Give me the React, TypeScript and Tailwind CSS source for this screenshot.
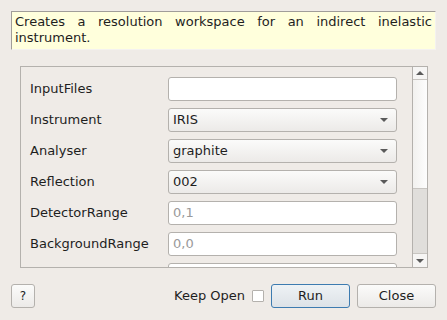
const font = { fontFamily: '"DejaVu Sans", sans-serif' };

function TextRow({ label, value }: { label: string; value?: string }) {
  return (
    <div className="flex items-center h-[24px]">
      <div className="w-[138px] text-[13px] text-[#1e1e1e]">{label}</div>
      <div className="w-[229px] h-[24px] bg-white border border-[#b4b1ad] rounded-[3px] flex items-center px-[4px] text-[13px] text-[#9a9a9a]">
        {value}
      </div>
    </div>
  );
}

function ComboRow({ label, value }: { label: string; value: string }) {
  return (
    <div className="flex items-center h-[24px]">
      <div className="w-[138px] text-[13px] text-[#1e1e1e]">{label}</div>
      <div className="w-[229px] h-[24px] border border-[#b4b1ad] rounded-[3px] flex items-center justify-between pl-[4px] pr-[8px] text-[13px] text-[#1e1e1e] bg-gradient-to-b from-[#fbfbfa] to-[#eceae8]">
        <span>{value}</span>
        <svg width="8" height="4" viewBox="0 0 8 4">
          <path d="M0 0 H8 L4 4 Z" fill="#5a5a5a" />
        </svg>
      </div>
    </div>
  );
}

export default function App() {
  return (
    <div
      className="w-[447px] h-[320px] bg-[#efebe7] flex flex-col px-[11px] pt-[11px] overflow-hidden"
      style={font}
    >
      {/* description */}
      <div className="h-[39px] bg-[#ffffdc] border-t border-l border-[#a09d99] border-r border-r-[#f4f2f0] border-b border-b-[#f4f2f0] px-[3px] pt-[2px] text-[13px] leading-[16px] text-[#1e1e1e] text-justify">
        Creates a resolution workspace for an indirect inelastic instrument.
      </div>

      {/* properties scroll area */}
      <div className="mt-[16px] ml-[9px] mr-[8px] h-[202px] border border-[#b4b1ad] flex overflow-hidden">
        <div className="flex-1 pl-[9px] pt-[10px] flex flex-col gap-[7px]">
          <TextRow label="InputFiles" />
          <ComboRow label="Instrument" value="IRIS" />
          <ComboRow label="Analyser" value="graphite" />
          <ComboRow label="Reflection" value="002" />
          <TextRow label="DetectorRange" value="0,1" />
          <TextRow label="BackgroundRange" value="0,0" />
          <TextRow label="" />
        </div>
        <div className="w-[15px] border-l border-[#b4b1ad] flex flex-col">
          <div className="h-[13px] border-b border-[#c8c5c1] bg-[#f6f5f4] flex items-center justify-center">
            <svg width="8" height="4" viewBox="0 0 8 4">
              <path d="M0 4 H8 L4 0 Z" fill="#5a5a5a" />
            </svg>
          </div>
          <div className="h-[109px] bg-gradient-to-r from-[#f2f1ef] to-[#fdfdfd] border-b border-[#c8c5c1]" />
          <div className="flex-1 bg-[#e0dedb]" />
          <div className="h-[14px] border-t border-[#c8c5c1] bg-[#f6f5f4] flex items-center justify-center">
            <svg width="8" height="4" viewBox="0 0 8 4">
              <path d="M0 0 H8 L4 4 Z" fill="#5a5a5a" />
            </svg>
          </div>
        </div>
      </div>

      {/* buttons */}
      <div className="mt-[16px] flex items-center h-[24px]">
        <div className="w-[24px] h-[24px] border border-[#b4b1ad] rounded-[3px] bg-gradient-to-b from-[#fbfbfa] to-[#eceae8] flex items-center justify-center text-[12px] text-[#1e1e1e]">
          ?
        </div>
        <div className="flex-1" />
        <span className="text-[13px] text-[#1e1e1e]">Keep Open</span>
        <div className="ml-[7px] w-[12px] h-[12px] bg-white border border-[#b4b1ad] rounded-[1px]" />
        <div className="ml-[7px] w-[79px] h-[24px] border border-[#3d7bb0] rounded-[3px] bg-gradient-to-b from-[#eef2f5] to-[#dde2e7] flex items-center justify-center text-[13px] text-[#1e1e1e]">
          Run
        </div>
        <div className="ml-[7px] w-[79px] h-[24px] border border-[#b4b1ad] rounded-[3px] bg-gradient-to-b from-[#fbfbfa] to-[#eceae8] flex items-center justify-center text-[13px] text-[#1e1e1e]">
          Close
        </div>
      </div>
    </div>
  );
}
